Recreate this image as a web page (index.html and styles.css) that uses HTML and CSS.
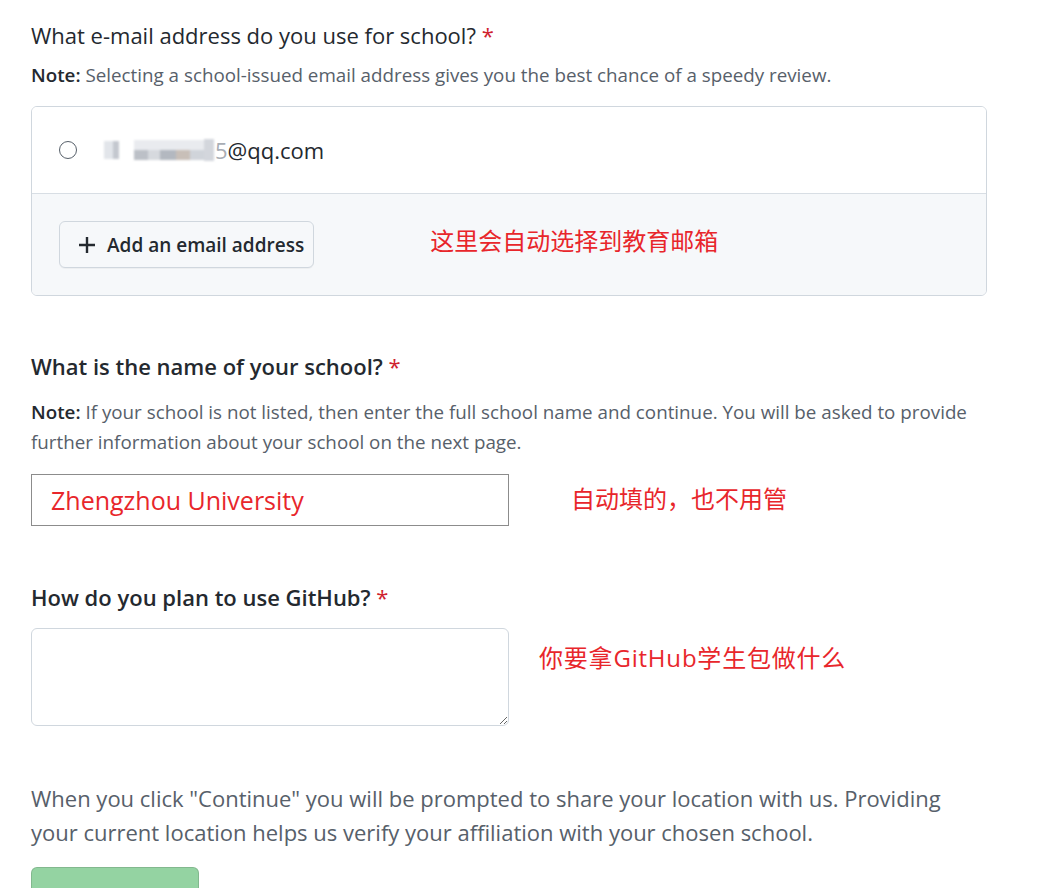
FILE: index.html
```html
<!DOCTYPE html>
<html lang="en">
<head>
  <meta charset="UTF-8" />
  <meta name="viewport" content="width=device-width, initial-scale=1.0"/>
  <title>GitHub Student Application</title>
  <link rel="stylesheet" href="styles.css">
</head>
<body>

<div class="form">

  <div class="group group-email">
    <div class="label">What e-mail address do you use for school? <span class="req">*</span></div>
    <p class="note"><b>Note:</b> Selecting a school-issued email address gives you the best chance of a speedy review.</p>

    <div class="box">
      <div class="box-row">
        <span class="radio"></span>
        <!-- blurred part of the address -->
        <span class="blur">
          <i class="bk bk-a"></i>
          <i class="bk bk-b"></i>
          <span class="bk-stack">
            <i class="bk-top"></i>
            <span class="bk-bottom"><i class="s1"></i><i class="s2"></i><i class="s3"></i><i class="s4"></i><i class="s5"></i></span>
          </span>
          <i class="bk bk-d"></i>
        </span>
        <span class="email"><span class="faint">5</span>@qq.com</span>
      </div>
      <div class="box-foot">
        <button class="btn-add" type="button">
          <svg width="18" height="18" viewBox="0 0 18 18"><path d="M9 1v16M1 9h16" stroke="#24292f" stroke-width="2.4" fill="none"/></svg>
          Add an email address
        </button>
        <span class="tip tip-email">这里会自动选择到教育邮箱</span>
      </div>
    </div>
  </div>

  <div class="group group-school">
    <div class="label bold">What is the name of your school? <span class="req">*</span></div>
    <p class="note"><b>Note:</b> If your school is not listed, then enter the full school name and continue. You will be asked to provide further information about your school on the next page.</p>
    <div class="row">
      <input class="school" type="text" value="Zhengzhou University">
      <span class="tip tip-school">自动填的，也不用管</span>
    </div>
  </div>

  <div class="group group-plan">
    <div class="label bold">How do you plan to use GitHub? <span class="req">*</span></div>
    <div class="row row-top">
      <textarea class="plan"></textarea>
      <span class="tip tip-plan">你要拿GitHub学生包做什么</span>
    </div>
  </div>

  <p class="location">When you click "Continue" you will be prompted to share your location with us. Providing your current location helps us verify your affiliation with your chosen school.</p>

  <button class="btn-continue" type="button">Continue</button>

</div>

</body>
</html>
```

FILE: styles.css
```css
body {
  margin: 0;
  padding: 20px 31px 0 31px;
  font-family: "Open Sans", "Noto Sans", "Noto Sans CJK SC", sans-serif;
  color: #24292f;
  background: #ffffff;
  overflow: hidden;
}

.form {
  width: 956px;
}

.label {
  font-size: 22px;
  line-height: 30px;
  color: #24292f;
}

.label.bold {
  font-weight: 600;
}

.req {
  color: #cf222e;
  font-weight: 400;
}

.note {
  margin: 10px 0 0 0;
  font-size: 18.8px;
  line-height: 30px;
  color: #57606a;
}

.note b {
  color: #24292f;
  font-weight: 600;
}

/* email box */
.box {
  margin-top: 16px;
  border: 1px solid #d0d7de;
  border-radius: 6px;
  overflow: hidden;
}

.box-row {
  display: flex;
  align-items: center;
  height: 86px;
  padding-left: 27px;
  border-bottom: 1px solid #d8dee4;
  background: #ffffff;
}

.radio {
  width: 18px;
  height: 18px;
  border: 1.5px solid #57606a;
  border-radius: 50%;
  box-sizing: border-box;
  margin-right: 27px;
}

.blur {
  display: flex;
  align-items: center;
  width: 110px;
  height: 26px;
  filter: blur(1.2px);
}

.bk {
  display: block;
}

.bk-a {
  width: 9px;
  height: 18px;
  background: #e2e5ea;
}

.bk-b {
  width: 6px;
  height: 18px;
  background: #c4c8cf;
  margin-right: 15px;
}

.bk-stack {
  display: flex;
  flex-direction: column;
  width: 70px;
}

.bk-top {
  display: block;
  height: 10px;
  background: #e9ebef;
}

.bk-bottom {
  display: flex;
  height: 10px;
}

.bk-bottom i {
  display: block;
  height: 10px;
}

.bk-bottom .s1 { width: 14px; background: #bcc0c7; }
.bk-bottom .s2 { width: 12px; background: #d6d9de; }
.bk-bottom .s3 { width: 16px; background: #b3b8c0; }
.bk-bottom .s4 { width: 14px; background: #c8bfb8; }
.bk-bottom .s5 { width: 14px; background: #d0d4da; }

.bk-d {
  width: 10px;
  height: 22px;
  background: #d3d6dc;
}

.email {
  font-size: 22px;
  color: #24292f;
  margin-left: 1px;
}

.faint {
  color: #a8adb5;
}

.box-foot {
  display: flex;
  align-items: center;
  height: 101px;
  padding-left: 27px;
  background: #f6f8fa;
}

.btn-add {
  display: flex;
  align-items: center;
  gap: 11px;
  height: 47px;
  padding: 0 9px 0 18px;
  font-family: inherit;
  font-size: 19px;
  font-weight: 600;
  color: #24292f;
  background: #f6f8fa;
  border: 1px solid #d0d7de;
  border-radius: 6px;
  box-shadow: 0 1px 0 rgba(27, 31, 36, 0.04);
}

.tip {
  font-size: 24px;
  color: #e8262b;
}

.tip-email {
  margin-left: 116px;
  margin-bottom: 10px;
}

/* school */
.group-school {
  margin-top: 55px;
}

.group-school .note {
  margin-top: 16px;
}

.row {
  display: flex;
  align-items: center;
}

.school {
  width: 478px;
  height: 52px;
  box-sizing: border-box;
  margin-top: 17px;
  padding: 0 19px;
  font-family: inherit;
  font-size: 25px;
  color: #e8262b;
  border: 1px solid #8c8c8c;
  border-radius: 0;
  outline: none;
}

.tip-school {
  margin-left: 62px;
  margin-top: 12px;
}

/* plan */
.group-plan {
  margin-top: 56px;
}

.row-top {
  align-items: flex-start;
}

.plan {
  width: 478px;
  height: 98px;
  box-sizing: border-box;
  margin-top: 16px;
  border: 1px solid #d0d7de;
  border-radius: 6px;
  font-family: inherit;
  resize: both;
}

.tip-plan {
  margin-left: 30px;
  margin-top: 27px;
  letter-spacing: 0.8px;
}

.location {
  margin: 55px 0 0 0;
  width: 930px;
  font-size: 22px;
  line-height: 34px;
  color: #57606a;
}

.btn-continue {
  margin-top: 18px;
  width: 168px;
  height: 64px;
  font-family: inherit;
  font-size: 20px;
  font-weight: 600;
  color: #ffffff;
  background: #94d3a2;
  border: 1px solid rgba(27, 31, 36, 0.15);
  border-radius: 6px;
}
```
